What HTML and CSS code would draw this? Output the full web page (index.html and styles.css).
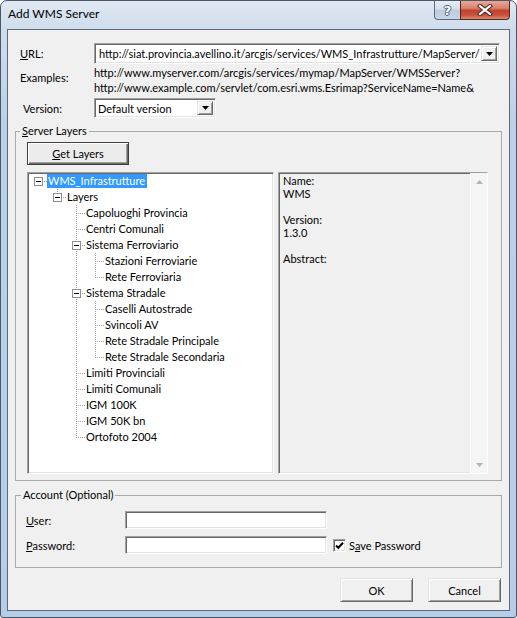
FILE: index.html
```html
<!DOCTYPE html>
<html>
<head>
<meta charset="utf-8">
<title>Add WMS Server</title>
<link rel="stylesheet" href="styles.css">
</head>
<body>
<div class="window">
  <div class="titlebar">
    <span class="title">Add WMS Server</span>
    <div class="caption-btns">
      <div class="cbtn help">?</div>
      <div class="cbtn close">
        <svg width="16" height="12" viewBox="0 0 16 12"><path d="M3 2 L13 10 M13 2 L3 10" stroke="#4a2a24" stroke-width="4.2" stroke-linecap="square" fill="none"/><path d="M3 2 L13 10 M13 2 L3 10" stroke="#ffffff" stroke-width="2.2" stroke-linecap="square" fill="none"/></svg>
      </div>
    </div>
  </div>
  <div class="client">
    <div class="frow url-row">
      <span class="lbl"><u>U</u>RL:</span>
      <div class="combo url-combo sunken">
        <span class="combo-text">http://siat.provincia.avellino.it/arcgis/services/WMS_Infrastrutture/MapServer/</span>
        <span class="drop raised"><svg width="7" height="4" viewBox="0 0 7 4"><path d="M0 0 H7 L3.5 4 Z" fill="#000"/></svg></span>
      </div>
    </div>
    <div class="frow ex-row">
      <span class="lbl ex-lbl">Examples:</span>
      <div class="examples">
        <div>http://www.myserver.com/arcgis/services/mymap/MapServer/WMSServer?</div>
        <div>http://www.example.com/servlet/com.esri.wms.Esrimap?ServiceName=Name&amp;</div>
      </div>
    </div>
    <div class="frow ver-row">
      <span class="lbl ver-lbl">Version:</span>
      <div class="combo ver-combo sunken">
        <span class="combo-text">Default version</span>
        <span class="drop raised"><svg width="7" height="4" viewBox="0 0 7 4"><path d="M0 0 H7 L3.5 4 Z" fill="#000"/></svg></span>
      </div>
    </div>

    <fieldset class="group layers-group">
      <legend class="legend-layers"><u>S</u>erver Layers</legend>
      <div class="btn default get-btn"><u>G</u>et Layers</div>
      <div class="panes">
        <div class="tree sunken">
          <div class="trow"><span class="c box root"><i class="pm"></i></span><span class="tx sel">WMS_Infrastrutture</span></div>
          <div class="trow"><span class="c"></span><span class="c box elbow"><i class="pm"></i></span><span class="tx">Layers</span></div>
          <div class="trow"><span class="c"></span><span class="c"></span><span class="c t"></span><span class="tx">Capoluoghi Provincia</span></div>
          <div class="trow"><span class="c"></span><span class="c"></span><span class="c t"></span><span class="tx">Centri Comunali</span></div>
          <div class="trow"><span class="c"></span><span class="c"></span><span class="c box tee"><i class="pm"></i></span><span class="tx">Sistema Ferroviario</span></div>
          <div class="trow"><span class="c"></span><span class="c"></span><span class="c v"></span><span class="c t"></span><span class="tx">Stazioni Ferroviarie</span></div>
          <div class="trow"><span class="c"></span><span class="c"></span><span class="c v"></span><span class="c l"></span><span class="tx">Rete Ferroviaria</span></div>
          <div class="trow"><span class="c"></span><span class="c"></span><span class="c box tee"><i class="pm"></i></span><span class="tx">Sistema Stradale</span></div>
          <div class="trow"><span class="c"></span><span class="c"></span><span class="c v"></span><span class="c t"></span><span class="tx">Caselli Autostrade</span></div>
          <div class="trow"><span class="c"></span><span class="c"></span><span class="c v"></span><span class="c t"></span><span class="tx">Svincoli AV</span></div>
          <div class="trow"><span class="c"></span><span class="c"></span><span class="c v"></span><span class="c t"></span><span class="tx">Rete Stradale Principale</span></div>
          <div class="trow"><span class="c"></span><span class="c"></span><span class="c v"></span><span class="c l"></span><span class="tx">Rete Stradale Secondaria</span></div>
          <div class="trow"><span class="c"></span><span class="c"></span><span class="c t"></span><span class="tx">Limiti Provinciali</span></div>
          <div class="trow"><span class="c"></span><span class="c"></span><span class="c t"></span><span class="tx">Limiti Comunali</span></div>
          <div class="trow"><span class="c"></span><span class="c"></span><span class="c t"></span><span class="tx">IGM 100K</span></div>
          <div class="trow"><span class="c"></span><span class="c"></span><span class="c t"></span><span class="tx">IGM 50K bn</span></div>
          <div class="trow"><span class="c"></span><span class="c"></span><span class="c l"></span><span class="tx">Ortofoto 2004</span></div>
        </div>
        <div class="info sunken">
          <div class="info-text">
            <p>Name:<br>WMS</p>
            <p>Version:<br>1.3.0</p>
            <p>Abstract:</p>
          </div>
          <div class="vscroll">
            <span class="sarrow"><svg width="7" height="4" viewBox="0 0 7 4"><path d="M0 4 H7 L3.5 0 Z" fill="#b4b4b4"/></svg></span>
            <span class="sarrow"><svg width="7" height="4" viewBox="0 0 7 4"><path d="M0 0 H7 L3.5 4 Z" fill="#b4b4b4"/></svg></span>
          </div>
        </div>
      </div>
    </fieldset>

    <fieldset class="group account-group">
      <legend class="legend-account">Account (Optional)</legend>
      <div class="arow">
        <span class="alabel"><u>U</u>ser:</span>
        <div class="field sunken"></div>
      </div>
      <div class="arow">
        <span class="alabel"><u>P</u>assword:</span>
        <div class="field sunken"></div>
        <span class="chk sunken"><svg width="9" height="9" viewBox="0 0 9 9"><path d="M1 4.5 L3.3 6.8 L8 1.8" stroke="#000" stroke-width="2" fill="none"/></svg></span>
        <span class="chk-lbl">S<u>a</u>ve Password</span>
      </div>
    </fieldset>

    <div class="actions">
      <div class="btn raised-btn">OK</div>
      <div class="btn raised-btn">Cancel</div>
    </div>
  </div>
</div>
</body>
</html>
```

FILE: styles.css
```css
* { box-sizing: border-box; }
html, body { margin: 0; padding: 0; }
body {
  width: 517px;
  height: 618px;
  overflow: hidden;
  background: #ffffff;
  font-family: Lato, "Liberation Sans", sans-serif;
  font-size: 11px;
  color: #000;
}
u { text-decoration: underline; text-underline-offset: 1px; }

.window {
  width: 517px;
  height: 618px;
  display: flex;
  flex-direction: column;
  padding: 0 6px 6px 6px;
  border: 1px solid #4b5666;
  border-radius: 7px 7px 3px 3px;
  background: linear-gradient(180deg, #e1e9f3 0px, #cfdcec 28px, #bcd1e9 120px, #b6cde8 100%);
}

/* title bar */
.titlebar {
  height: 28px;
  display: flex;
  align-items: flex-start;
  padding-left: 1px;
}
.title {
  font-size: 12px;
  line-height: 12px;
  margin-top: 7px;
  color: #000;
}
.caption-btns {
  margin-left: auto;
  display: flex;
  height: 19px;
}
.cbtn {
  height: 19px;
  display: flex;
  align-items: center;
  justify-content: center;
  border: 1px solid #5d6b7e;
  border-top: none;
}
.help {
  width: 26px;
  border-right: none;
  border-radius: 0 0 0 4px;
  background: linear-gradient(180deg, #e6edf5 0%, #d3deea 45%, #bccbdd 50%, #c8d6e6 100%);
  color: #f7f9fb;
  font-family: "DejaVu Sans", sans-serif;
  font-weight: bold;
  font-size: 13px;
  text-shadow: 1px 0 #56657a, -1px 0 #56657a, 0 1px #56657a, 0 -1px #56657a;
}
.close {
  width: 50px;
  border-color: #4d2922;
  border-radius: 0 0 4px 0;
  background: linear-gradient(180deg, #e9a796 0%, #d8826f 40%, #c2432e 52%, #c8513b 78%, #de8a6f 100%);
}

/* client area */
.client {
  flex: 1;
  display: flex;
  flex-direction: column;
  background: #f0f0f0;
  border: 1px solid #5d6a7b;
}

.frow {
  display: flex;
  margin-left: 12px;
  margin-right: 9px;
}
.lbl { width: 74px; flex: none; }
.url-row { margin-top: 13px; height: 21px; align-items: center; }
.ex-row { margin-top: 1px; }
.ex-lbl { padding-top: 5px; line-height: 15px; }
.examples { line-height: 15px; white-space: nowrap; }
.ver-row { margin-top: 3px; height: 20px; align-items: center; }
.ver-lbl { padding-left: 3px; }

.sunken {
  background: #fff;
  border: 1px solid;
  border-color: #a0a0a0 #ffffff #ffffff #a0a0a0;
  box-shadow: inset 1px 1px 0 #696969, inset -1px -1px 0 #e3e3e3;
}
.raised {
  background: #f0f0f0;
  border: 1px solid;
  border-color: #e3e3e3 #696969 #696969 #e3e3e3;
  box-shadow: inset 1px 1px 0 #ffffff, inset -1px -1px 0 #a0a0a0;
}

.combo {
  display: flex;
  align-items: center;
  padding: 1px;
}
.url-combo { width: 406px; height: 21px; }
.ver-combo { width: 122px; height: 20px; }
.combo-text {
  flex: 1;
  white-space: nowrap;
  overflow: hidden;
  padding-left: 3px;
}
.ver-combo .combo-text { padding-left: 2px; }
.drop {
  width: 16px;
  align-self: stretch;
  display: flex;
  align-items: center;
  justify-content: center;
  margin: 1px;
}

/* group boxes */
.group {
  margin: 0 7px;
  border: 1px solid #a9a9a9;
  min-width: 0;
}
.group legend {
  padding: 0 2px;
  line-height: 14px;
}
.layers-group {
  margin-top: 6px;
  padding: 4px 13px 6px 11px;
}
.legend-layers { margin-left: -7px; }
.account-group {
  margin-top: 7px;
  padding: 9px 10px 13px 10px;
}
.legend-account { margin-left: -5px; }

.btn {
  display: flex;
  align-items: center;
  justify-content: center;
  background: #f0f0f0;
  cursor: default;
}
.get-btn {
  width: 102px;
  height: 23px;
  border: 1px solid #3f3f3f;
  background: #ececec;
  box-shadow: inset 1px 1px 0 #ffffff, inset -1px -1px 0 #696969, inset -2px -2px 0 #a0a0a0;
}
.raised-btn {
  width: 73px;
  height: 24px;
  border: 1px solid;
  border-color: #e3e3e3 #696969 #696969 #e3e3e3;
  box-shadow: inset 1px 1px 0 #ffffff, inset -1px -1px 0 #a0a0a0;
}

.panes {
  display: flex;
  gap: 4px;
  margin-top: 7px;
  height: 302px;
}
.tree {
  width: 247px;
  flex: none;
  padding: 0 0 0 1px;
}
.trow {
  display: flex;
  height: 16px;
  align-items: center;
  white-space: nowrap;
}
.c {
  width: 19px;
  height: 16px;
  flex: none;
  display: block;
}
.c.v {
  background: repeating-linear-gradient(to bottom, #a0a0a0 0 1px, transparent 1px 2px) 9px 0 / 1px 16px no-repeat;
}
.c.t {
  background:
    repeating-linear-gradient(to bottom, #a0a0a0 0 1px, transparent 1px 2px) 9px 0 / 1px 16px no-repeat,
    repeating-linear-gradient(to right, #a0a0a0 0 1px, transparent 1px 2px) 11px 8px / 8px 1px no-repeat;
}
.c.l {
  background:
    repeating-linear-gradient(to bottom, #a0a0a0 0 1px, transparent 1px 2px) 9px 0 / 1px 9px no-repeat,
    repeating-linear-gradient(to right, #a0a0a0 0 1px, transparent 1px 2px) 11px 8px / 8px 1px no-repeat;
}
.c.root {
  background: repeating-linear-gradient(to right, #a0a0a0 0 1px, transparent 1px 2px) 15px 8px / 4px 1px no-repeat;
}
.c.elbow {
  background:
    repeating-linear-gradient(to bottom, #a0a0a0 0 1px, transparent 1px 2px) 9px 0 / 1px 4px no-repeat,
    repeating-linear-gradient(to right, #a0a0a0 0 1px, transparent 1px 2px) 15px 8px / 4px 1px no-repeat;
}
.c.tee {
  background:
    repeating-linear-gradient(to bottom, #a0a0a0 0 1px, transparent 1px 2px) 9px 0 / 1px 16px no-repeat,
    repeating-linear-gradient(to right, #a0a0a0 0 1px, transparent 1px 2px) 15px 8px / 4px 1px no-repeat;
}
.pm {
  display: block;
  width: 9px;
  height: 9px;
  margin: 4px 0 0 5px;
  border: 1px solid #8e8f8f;
  background: linear-gradient(#000, #000) center / 5px 1px no-repeat, #fff;
}
.tx {
  line-height: 14px;
  padding: 0 2px 0 1px;
  margin-left: -1px;
}
.tx.sel {
  background: #3399ff;
  color: #fff;
}

.info {
  width: 210px;
  flex: none;
  display: flex;
  background: #f0f0f0;
}
.info-text {
  flex: 1;
  padding: 1px 0 0 4px;
  line-height: 13px;
}
.info-text p { margin: 0 0 13px 0; }
.vscroll {
  width: 17px;
  flex: none;
  display: flex;
  flex-direction: column;
  justify-content: space-between;
  background: #f5f5f5;
  border-left: 1px solid #fbfbfb;
}
.sarrow {
  height: 17px;
  display: flex;
  align-items: center;
  justify-content: center;
}

/* account */
.arow {
  display: flex;
  align-items: center;
  height: 18px;
}
.arow + .arow { margin-top: 7px; }
.alabel { width: 99px; flex: none; }
.field { width: 202px; height: 18px; flex: none; }
.chk {
  width: 13px;
  height: 13px;
  margin-left: 6px;
  display: flex;
  align-items: center;
  justify-content: center;
  flex: none;
}
.chk-lbl { margin-left: 3px; }

.actions {
  display: flex;
  justify-content: flex-end;
  gap: 15px;
  margin-top: 10px;
  padding-right: 8px;
}
```
